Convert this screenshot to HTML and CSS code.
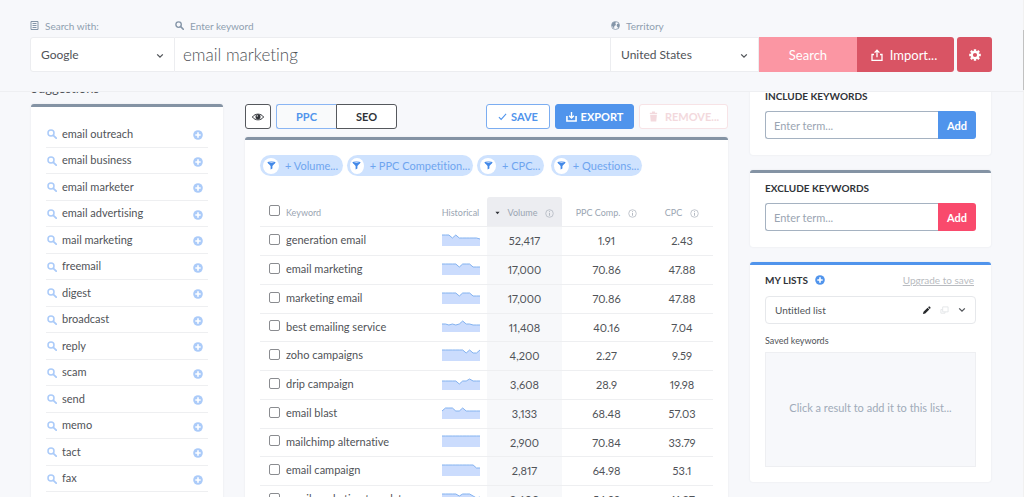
FILE: index.html
```html
<!DOCTYPE html>
<html lang="en">

<head>
    <meta charset="utf-8">
    <title>Keyword Research</title>
    <link rel="stylesheet" href="styles.css">
</head>

<body>
    <!-- Shared icons -->
    <svg class="sprite" aria-hidden="true">
        <symbol id="icon-search" viewBox="0 0 10 10">
            <circle cx="4" cy="4" r="3" fill="none" stroke="currentColor" stroke-width="1.5" />
            <path d="M6.3 6.3L9.2 9.2" stroke="currentColor" stroke-width="1.8" stroke-linecap="round" />
        </symbol>
        <symbol id="icon-plus" viewBox="0 0 10 10">
            <circle cx="5" cy="5" r="4.8" fill="currentColor" />
            <path d="M5 2.3v5.4M2.3 5h5.4" stroke="#fff" stroke-width="1.6" />
        </symbol>
        <symbol id="icon-chevron" viewBox="0 0 8 6">
            <path d="M1.2 1.4L4 4.2l2.8-2.8" fill="none" stroke="currentColor" stroke-width="1.3" />
        </symbol>
        <symbol id="icon-filter" viewBox="0 0 10 10">
            <path d="M.5 1.8L4 5.5v4l2-1.3V5.5l3.5-3.7z" fill="currentColor" />
            <ellipse cx="5" cy="1.8" rx="4.4" ry="1.3" fill="currentColor" />
            <ellipse cx="5" cy="1.7" rx="3" ry=".5" fill="#b5d2fa" />
        </symbol>
        <symbol id="icon-info" viewBox="0 0 10 10">
            <circle cx="5" cy="5" r="4.2" fill="none" stroke="currentColor" stroke-width=".9" />
            <path d="M5 4.3v3.2M5 2.4v1" stroke="currentColor" stroke-width="1.1" />
        </symbol>
    </svg>

    <header class="search-bar">
        <div class="field engine">
            <label for="engine">
                <svg class="label-icon" viewBox="0 0 8 9"><path d="M.5.5h7v8h-7z" fill="none" stroke="currentColor" /><path d="M2 2.5h4M2 4.5h4M2 6.5h4" stroke="currentColor" /></svg>
                Search with:
            </label>
            <div class="select">
                <select id="engine">
                    <option>Google</option>
                </select>
                <svg class="chevron"><use href="#icon-chevron" /></svg>
            </div>
        </div>
        <div class="field keyword">
            <label for="keyword">
                <svg class="label-icon"><use href="#icon-search" /></svg>
                Enter keyword
            </label>
            <input type="text" id="keyword" value="email marketing">
        </div>
        <div class="field territory">
            <label for="territory">
                <svg class="label-icon" viewBox="0 0 9 9"><circle cx="4.5" cy="4.5" r="4" fill="none" stroke="currentColor" stroke-width=".8" /><path d="M1 2.5L3 .8l2 .4-.6 1.3L5 4 3.4 5 3 7.5 1.6 5.4.7 4.4zM6 3l2-.6.5 2-1 2.8-1.3-1.4L5.6 4.4z" fill="currentColor" /></svg>
                Territory
            </label>
            <div class="select">
                <select id="territory">
                    <option>United States</option>
                </select>
                <svg class="chevron"><use href="#icon-chevron" /></svg>
            </div>
        </div>
        <button class="search-button">Search</button>
        <button class="import-button">
            <svg viewBox="0 0 12 12"><path d="M3 5.5H1v5.8h10V5.5H9" fill="none" stroke="currentColor" stroke-width="1.3" /><path d="M6 8.3V1.5M3.6 3.6L6 1.2l2.4 2.4" fill="none" stroke="currentColor" stroke-width="1.3" /></svg>
            Import...
        </button>
        <button class="settings-button" aria-label="Settings">
            <svg viewBox="0 0 12 12"><circle cx="6" cy="6" r="3.2" fill="none" stroke="currentColor" stroke-width="2.2" /><path d="M6 .2v2M6 9.8v2M.2 6h2M9.8 6h2M1.9 1.9l1.4 1.4M8.7 8.7l1.4 1.4M1.9 10.1l1.4-1.4M8.7 3.3l1.4-1.4" stroke="currentColor" stroke-width="2.4" /></svg>
        </button>
    </header>

    <main>
        <aside class="suggestions">
            <h2>Suggestions</h2>
            <ul class="card" id="suggestions"></ul>
        </aside>

        <section class="results">
            <div class="toolbar">
                <button class="eye" aria-label="Show columns">
                    <svg viewBox="0 0 12 8"><path d="M.4 4C3 .2 9 .2 11.6 4 9 7.8 3 7.8.4 4z" fill="none" stroke="currentColor" /><circle cx="6" cy="3.7" r="2.5" fill="currentColor" /><circle cx="5.3" cy="2.9" r=".7" fill="#fff" /></svg>
                </button>
                <div class="tabs">
                    <button class="active">PPC</button>
                    <button>SEO</button>
                </div>
                <button class="save">
                    <svg viewBox="0 0 10 10"><path d="M1 5.6l2.5 2.6L9 2.2" fill="none" stroke="currentColor" stroke-width="1.2" /></svg>
                    SAVE
                </button>
                <button class="export">
                    <svg viewBox="0 0 12 12"><path d="M1 5.5v5.4h10V5.5" fill="none" stroke="currentColor" stroke-width="1.7" /><path d="M6 1v6.5M3.4 5.2L6 7.8l2.6-2.6" fill="none" stroke="currentColor" stroke-width="1.5" /></svg>
                    EXPORT
                </button>
                <button class="remove" disabled>
                    <svg viewBox="0 0 10 12"><path d="M1.3 4h7.4L8 11.5H2z" fill="currentColor" /><path d="M1 2.6h8M3.4 1.3h3.2" stroke="currentColor" stroke-width="1.5" /></svg>
                    REMOVE...
                </button>
            </div>

            <div class="card table-card">
                <div class="filters">
                    <button class="filter-volume"><span><svg><use href="#icon-filter" /></svg></span>+ Volume...</button>
                    <button class="filter-ppc"><span><svg><use href="#icon-filter" /></svg></span>+ PPC Competition...</button>
                    <button class="filter-cpc"><span><svg><use href="#icon-filter" /></svg></span>+ CPC...</button>
                    <button class="filter-questions"><span><svg><use href="#icon-filter" /></svg></span>+ Questions...</button>
                </div>
                <table>
                    <thead>
                        <tr>
                            <th class="check"><input type="checkbox" aria-label="Select all"></th>
                            <th class="name">Keyword</th>
                            <th class="history">Historical</th>
                            <th class="volume"><svg class="sort" viewBox="0 0 6 4"><path d="M.5.5h5L3 3.5z" fill="currentColor" /></svg>Volume<svg class="info"><use href="#icon-info" /></svg></th>
                            <th class="ppc">PPC Comp.<svg class="info"><use href="#icon-info" /></svg></th>
                            <th class="cpc">CPC<svg class="info"><use href="#icon-info" /></svg></th>
                        </tr>
                    </thead>
                    <tbody id="rows"></tbody>
                </table>
            </div>
        </section>

        <aside class="side">
            <section class="card">
                <h3><label for="include">INCLUDE KEYWORDS</label></h3>
                <div class="term">
                    <input type="text" id="include" placeholder="Enter term...">
                    <button>Add</button>
                </div>
            </section>
            <section class="card">
                <h3><label for="exclude">EXCLUDE KEYWORDS</label></h3>
                <div class="term exclude">
                    <input type="text" id="exclude" placeholder="Enter term...">
                    <button>Add</button>
                </div>
            </section>
            <section class="card lists">
                <div class="lists-head">
                    <h3>MY LISTS</h3>
                    <button class="add-list" aria-label="Add list"><svg><use href="#icon-plus" /></svg></button>
                    <a href="#">Upgrade to save</a>
                </div>
                <button class="list-picker">
                    <span>Untitled list</span>
                    <svg class="pencil" viewBox="0 0 10 10"><path d="M1 9l.7-2.6L6.2 2l1.9 1.9-4.5 4.5zM6.8 1.4L7.6.6h1l.8.8v1l-.8.8z" fill="currentColor" /></svg>
                    <svg class="copy" viewBox="0 0 10 10"><path d="M3 1h6v5.5H3zM3 4H1v4h4.5V6.5" fill="none" stroke="currentColor" /></svg>
                    <svg class="chevron"><use href="#icon-chevron" /></svg>
                </button>
                <p class="saved-title">Saved keywords</p>
                <div class="saved">Click a result to add it to this list...</div>
            </section>
        </aside>
    </main>
    <div class="scrollbar"><div class="thumb"></div></div>

    <script>
        const suggestions = ['email outreach', 'email business', 'email marketer', 'email advertising',
            'mail marketing', 'freemail', 'digest', 'broadcast', 'reply', 'scam', 'send', 'memo', 'tact', 'fax'];

        // name, volume, ppc competition, cpc, trend (distance from the top of the chart)
        const keywords = [
            ['generation email', '52,417', '1.91', '2.43', [1, 1, 1, 4, 1, 4, 4, 4, 4, 4, 4, 5]],
            ['email marketing', '17,000', '70.86', '47.88', [1, 1, 1, 1, 1, 4, 1, 1, 1, 4, 4, 4]],
            ['marketing email', '17,000', '70.86', '47.88', [1, 1, 1, 1, 1, 4, 1, 1, 1, 4, 4, 4]],
            ['best emailing service', '11,408', '40.16', '7.04', [4, 4, 5, 4, 5, 4, 1, 4, 4, 5, 5, 5]],
            ['zoho campaigns', '4,200', '2.27', '9.59', [1, 1, 1, 1, 1, 1, 1, 4, 1, 4, 4, 1]],
            ['drip campaign', '3,608', '28.9', '19.98', [3, 3, 3, 3, 3, 6, 3, 3, 1, 3, 3, 3]],
            ['email blast', '3,133', '68.48', '57.03', [4, 1, 1, 1, 4, 4, 1, 4, 4, 4, 4, 4]],
            ['mailchimp alternative', '2,900', '70.84', '33.79', [1, 1, 1, 1, 1, 1, 1, 1, 1, 1, 1, 1]],
            ['email campaign', '2,817', '64.98', '53.1', [1, 1, 1, 1, 1, 1, 1, 1, 1, 1, 4, 4]],
            ['email marketing templates', '2,600', '54.99', '41.37', [1, 1, 1, 1, 1, 3, 1, 1, 1, 3, 5, 4]]
        ];

        // Build the small trend chart
        function sparkline(points) {
            const line = points.map((y, i) => (i * 38 / 11).toFixed(1) + ' ' + y).join(' L');
            return `<svg class="spark" viewBox="0 0 38 12"><path class="area" d="M${line} L38 12 L0 12z"/><path class="line" d="M${line}"/></svg>`;
        }

        document.getElementById('suggestions').innerHTML = suggestions.map(name => `
            <li><svg class="find"><use href="#icon-search"/></svg><a href="#">${name}</a>
            <button aria-label="Add ${name}"><svg><use href="#icon-plus"/></svg></button></li>`).join('');

        document.getElementById('rows').innerHTML = keywords.map(([name, volume, ppc, cpc, trend]) => `
            <tr><td class="check"><input type="checkbox" aria-label="${name}"></td><td class="name">${name}</td>
            <td class="history">${sparkline(trend)}</td><td class="volume">${volume}</td>
            <td class="ppc">${ppc}</td><td class="cpc">${cpc}</td></tr>`).join('');
    </script>
</body>

</html>
```
FILE: styles.css
```css
* {
    box-sizing: border-box;
}

body {
    margin: 0;
    height: 100vh;
    overflow: hidden;
    background-color: #f7f8fb;
    color: #505358;
    font-family: Lato, 'Liberation Sans', sans-serif;
    font-size: 11px;
    font-variant-ligatures: none;
}

button, input, select {
    font: inherit;
    font-variant-ligatures: none;
    color: inherit;
    margin: 0;
}

button {
    display: flex;
    align-items: center;
    justify-content: center;
    padding: 0;
    border: none;
    white-space: nowrap;
    cursor: pointer;
}

svg {
    display: block;
    flex: none;
}

.sprite {
    position: absolute;
    width: 0;
    height: 0;
}

/* Search bar */
.search-bar {
    position: fixed;
    top: 0;
    left: 0;
    right: 0;
    z-index: 1;
    display: flex;
    align-items: flex-end;
    padding: 18px 32px 19px 30px;
    background-color: #f7f8fb;
    border-bottom: 1px solid #eeeff2;
}

.field label {
    display: flex;
    align-items: center;
    gap: 6px;
    height: 15px;
    margin-bottom: 4px;
    font-size: 10px;
    color: #8f9fb0;
}

.label-icon {
    width: 9px;
    height: 9px;
    color: #8495a8;
}

.engine {
    width: 145px;
}

.keyword {
    flex: 1;
}

.territory {
    width: 148px;
}

.select {
    position: relative;
}

.select select,
.field input {
    display: block;
    width: 100%;
    height: 35px;
    padding: 0 10px;
    border: 1px solid #ecedf0;
    border-radius: 0;
    background-color: #fff;
    font-size: 12px;
    appearance: none;
}

.field input {
    padding: 0 8px;
    border-left: none;
    font-size: 17px;
    font-weight: 300;
    outline: none;
}

.engine select {
    border-radius: 3px 0 0 3px;
}

.territory select {
    border-left: none;
}

.select .chevron {
    position: absolute;
    right: 11px;
    top: 16px;
}

.chevron {
    width: 8px;
    height: 6px;
}

.search-button,
.import-button,
.settings-button {
    height: 35px;
    color: #fff;
    background-color: #d95464;
    font-size: 13px;
}

.search-button {
    width: 98px;
    background-color: #fb96a3;
}

.import-button {
    width: 97px;
    gap: 7px;
    padding-right: 3px;
    border-radius: 0 3px 3px 0;
}

.settings-button {
    width: 35px;
    margin-left: 3px;
    border-radius: 3px;
}

.import-button svg,
.settings-button svg {
    width: 12px;
    height: 12px;
}

/* Page columns, the top slides under the search bar */
main {
    display: grid;
    grid-template-columns: 192px 1fr 241px;
    gap: 22px;
    padding: 78px 33px 0 31px;
}

.card {
    margin: 0;
    padding: 7px 15px 15px;
    background-color: #fff;
    border-top: 3px solid #8493a4;
    border-radius: 3px;
    box-shadow: 0 0 2px #e2e4e9;
}

/* Suggestions */
.suggestions h2 {
    margin: 0 0 6px;
    font-size: 13px;
    line-height: 20px;
    font-weight: normal;
}

.suggestions ul {
    padding-top: 14px;
    list-style: none;
}

.suggestions li {
    display: flex;
    align-items: center;
    height: 27px;
    padding: 0 5px 0 1px;
    border-bottom: 1px solid #eeeff1;
}

.suggestions li:nth-child(even) {
    height: 26px;
}

.suggestions a {
    flex: 1;
    margin-left: 5px;
    padding-bottom: 2px;
    color: inherit;
    text-decoration: none;
}

.suggestions li svg {
    width: 10px;
    height: 10px;
    color: #abcbf9;
}

.suggestions button {
    padding-top: 2px;
    background: none;
}

/* Toolbar */
.toolbar {
    display: flex;
    gap: 5px;
    padding-top: 26px;
    margin-bottom: 8px;
}

.toolbar button {
    height: 25px;
    border: 1px solid #55585d;
    border-radius: 3px;
    background-color: #fff;
    color: #303338;
    font-size: 11px;
    font-weight: bold;
}

.toolbar .eye {
    width: 26px;
}

.eye svg {
    width: 12px;
    height: 8px;
}

.tabs {
    display: flex;
    margin-right: auto;
}

.toolbar .tabs button {
    width: 61px;
    border-radius: 0 3px 3px 0;
}

.toolbar .tabs .active {
    width: 60px;
    border-color: #8ab5f3;
    border-right: none;
    border-radius: 3px 0 0 3px;
    background-color: #f9fafb;
    color: #5094ec;
}

.toolbar .save {
    width: 64px;
    gap: 4px;
    border-color: #7badf1;
    color: #5094ec;
}

.toolbar .export {
    width: 79px;
    gap: 4px;
    border-color: #5094ec;
    background-color: #5094ec;
    color: #fff;
}

.toolbar .remove {
    width: 89px;
    gap: 6px;
    border-color: #f7e3e6;
    color: #f3d9dd;
}

.save svg {
    width: 9px;
    height: 9px;
}

.export svg,
.remove svg {
    width: 11px;
    height: 11px;
}

/* Filters */
.table-card {
    padding-top: 15px;
}

.filters {
    display: flex;
    gap: 4px;
    margin-bottom: 21px;
}

.filters button {
    justify-content: flex-start;
    height: 21px;
    padding: 0 3px;
    border-radius: 11px;
    background-color: #cee2fe;
    color: #6ea5ef;
    font-size: 11px;
}

.filters span {
    display: flex;
    align-items: center;
    justify-content: center;
    width: 16px;
    height: 16px;
    margin-right: 6px;
    border-radius: 50%;
    background-color: #fff;
    color: #4389e8;
}

.filters svg {
    width: 9px;
    height: 9px;
}

.filter-volume {
    width: 83px;
}

.filter-ppc {
    width: 126px;
}

.filter-cpc {
    width: 67px;
}

.filter-questions {
    width: 91px;
    margin-left: 3px;
}

.filter-questions span {
    margin-right: 4px;
}

/* Results table */
table {
    width: 100%;
    border-collapse: collapse;
    table-layout: fixed;
}

th, td {
    height: 29px;
    padding: 0;
    border-bottom: 1px solid #eeeff1;
    text-align: center;
    font-variant-numeric: proportional-nums;
}

th {
    padding-top: 2px;
    font-size: 9px;
    font-weight: normal;
    color: #9aa5b2;
}

tbody tr:nth-child(4n) td {
    height: 28px;
}

.check {
    width: 26px;
    text-align: left;
}

.check input {
    display: block;
    appearance: none;
    width: 11px;
    height: 11px;
    margin-left: 9px;
    margin-bottom: 3px;
    border: 1px solid #8a8c90;
    border-radius: 2px;
    background-color: #fff;
}

.name {
    text-align: left;
    white-space: nowrap;
}

td.name,
td.history {
    padding-bottom: 2px;
}

.history {
    width: 53px;
}

.volume {
    width: 75px;
    background-color: #f7f8fa;
}

th.volume {
    background-color: #ecedf1;
    border-radius: 3px 3px 0 0;
}

.ppc {
    width: 89px;
}

.cpc {
    width: 62px;
}

th svg {
    display: inline-block;
    vertical-align: middle;
}

.sort {
    width: 5px;
    height: 4px;
    margin-right: 8px;
    color: #303338;
}

.info {
    width: 9px;
    height: 9px;
    margin-left: 8px;
    color: #b4bac2;
}

.spark {
    width: 38px;
    height: 12px;
    margin: 0 auto;
}

.spark .area {
    fill: #cbdcfd;
}

.spark .line {
    fill: none;
    stroke: #83b2f0;
}

/* Right column */
.side {
    display: flex;
    flex-direction: column;
    gap: 15px;
}

h3 {
    margin: 0;
    font-size: 10px;
    line-height: 16px;
    color: #303338;
}

.term {
    display: flex;
    height: 28px;
    margin-top: 7px;
    margin-bottom: 1px;
}

.term input {
    flex: 1;
    min-width: 0;
    padding: 0 8px;
    border: 1px solid #a5b2c1;
    border-right: none;
    border-radius: 3px 0 0 3px;
    outline: none;
}

.term input::placeholder {
    color: #9aa5b2;
}

.term button {
    width: 38px;
    border-radius: 0 3px 3px 0;
    background-color: #5094ec;
    color: #fff;
    font-weight: bold;
}

.term.exclude button {
    background-color: #f94a6c;
}

.lists {
    border-top-color: #5094ec;
}

.lists-head {
    display: flex;
    align-items: center;
    gap: 7px;
}

.add-list {
    background: none;
    color: #5094ec;
}

.add-list svg {
    width: 10px;
    height: 10px;
}

.lists-head a {
    margin-left: auto;
    margin-right: 2px;
    font-size: 10px;
    color: #b9bcc1;
}

.list-picker {
    width: 100%;
    height: 28px;
    margin-top: 8px;
    padding: 0 9px;
    gap: 9px;
    border: 1px solid #e6e8eb;
    border-radius: 4px;
    background-color: #fff;
    font-size: 10px;
}

.list-picker span {
    flex: 1;
    text-align: left;
}

.list-picker .pencil,
.list-picker .copy {
    width: 9px;
    height: 9px;
}

.pencil {
    color: #26282b;
}

.copy {
    color: #e3e5e8;
}

.saved-title {
    margin: 11px 0 5px;
    font-size: 9px;
    line-height: 12px;
}

.saved {
    display: flex;
    align-items: center;
    justify-content: center;
    height: 115px;
    padding-bottom: 5px;
    border: 1px solid #eeeff2;
    background-color: #f7f8fb;
    color: #a0abb9;
    font-size: 11px;
}

/* Scrollbar at the window edge */
.scrollbar {
    position: fixed;
    top: 0;
    right: 0;
    bottom: 0;
    z-index: 2;
    width: 1px;
    padding-top: 30px;
    background-color: #f1f1f1;
}

.thumb {
    height: 60px;
    background-color: #c1c1c1;
}
```
